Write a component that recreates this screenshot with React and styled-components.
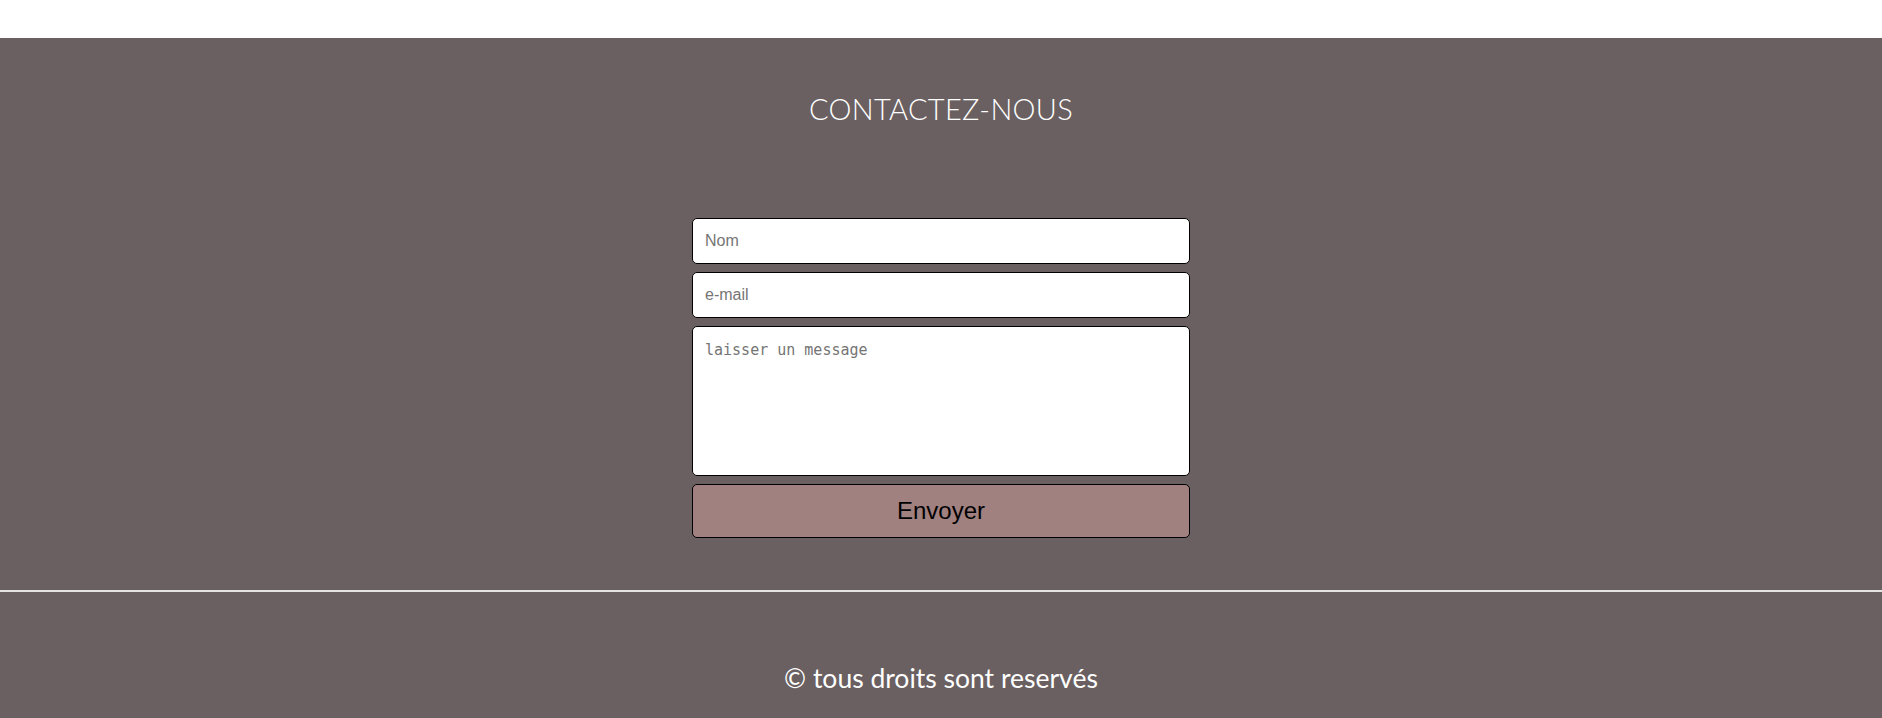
import React from "react";
import styled, { createGlobalStyle } from "styled-components";

const GlobalStyle = createGlobalStyle`
  body {
    margin: 0;
    background: #ffffff;
    font-family: "Liberation Sans", Arial, sans-serif;
  }
`;

//page sections
const Page = styled.div`
  padding-top: 38px;
`;

const Section = styled.section`
  background-color: #6a6061;
  display: flex;
  flex-direction: column;
  align-items: center;
  padding: 54px 0 52px;
`;

const Title = styled.h2`
  margin: 0;
  font-family: "Lato", sans-serif;
  font-weight: 300;
  font-size: 29px;
  letter-spacing: 0.3px;
  color: #ffffff;
  line-height: 34px;
`;

const Form = styled.form`
  margin-top: 92px;
  width: 498px;
  display: flex;
  flex-direction: column;
  gap: 8px;
`;

const Input = styled.input`
  box-sizing: border-box;
  height: 46px;
  width: 100%;
  border: 1px solid #000;
  border-radius: 5px;
  padding: 0 12px;
  font-family: "Liberation Sans", Arial, sans-serif;
  font-size: 16px;
  background: #fff;
  &::placeholder {
    color: #757575;
  }
`;

const Message = styled.textarea`
  box-sizing: border-box;
  height: 150px;
  width: 100%;
  border: 1px solid #000;
  border-radius: 5px;
  padding: 14px 12px;
  font-family: "DejaVu Sans Mono", "Liberation Mono", monospace;
  font-size: 15px;
  resize: none;
  background: #fff;
  &::placeholder {
    color: #757575;
  }
`;

const SendButton = styled.button`
  box-sizing: border-box;
  height: 54px;
  width: 100%;
  border: 1px solid #000;
  border-radius: 5px;
  background-color: #a18080;
  color: #000;
  font-family: "Liberation Sans", Arial, sans-serif;
  font-size: 24px;
  cursor: pointer;
`;

const Footer = styled.footer`
  background-color: #6a6061;
  border-top: 2px solid #e6e3e3;
  display: flex;
  justify-content: center;
  padding: 70px 0 24px;
`;

const Copy = styled.p`
  margin: 0;
  font-family: "Lato", sans-serif;
  font-weight: 400;
  font-size: 26.5px;
  line-height: 32px;
  color: #ffffff;
`;

const App = () => {
  return (
    <Page>
      <GlobalStyle />
      <Section>
        <Title>CONTACTEZ-NOUS</Title>
        <Form onSubmit={(e) => e.preventDefault()}>
          <Input type="text" placeholder="Nom" />
          <Input type="email" placeholder="e-mail" />
          <Message placeholder="laisser un message" />
          <SendButton type="submit">Envoyer</SendButton>
        </Form>
      </Section>
      <Footer>
        <Copy>© tous droits sont reservés</Copy>
      </Footer>
    </Page>
  );
};

export default App;
